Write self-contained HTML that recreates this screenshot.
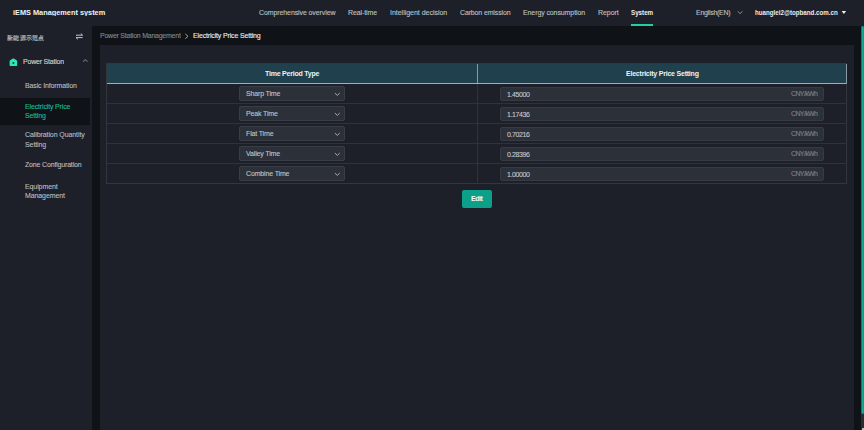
<!DOCTYPE html>
<html><head><meta charset="utf-8">
<style>
*{margin:0;padding:0;box-sizing:border-box}
html,body{width:864px;height:430px;overflow:hidden;background:#1d2029;font-family:"Liberation Sans",sans-serif}
.a{position:absolute}
.t{position:absolute;white-space:nowrap;transform-origin:0 0}
</style></head><body>

<div class="a" style="left:0px;top:0px;width:864px;height:26px;background:#1d2029;"></div>
<div class="t" style="left:13px;top:8.3px;font-size:16px;line-height:16px;color:#f2f3f4;font-weight:700;letter-spacing:0.000px;transform:scale(0.4590,0.5);">iEMS Management system</div>
<div class="t" style="left:259px;top:8.8px;font-size:14px;line-height:14px;color:#bfc2c6;font-weight:400;letter-spacing:-0.200px;-webkit-text-stroke:0.2px #bfc2c6;transform:scale(0.5000,0.5);">Comprehensive overview</div>
<div class="t" style="left:348px;top:8.8px;font-size:14px;line-height:14px;color:#bfc2c6;font-weight:400;letter-spacing:-0.200px;-webkit-text-stroke:0.2px #bfc2c6;transform:scale(0.5000,0.5);">Real-time</div>
<div class="t" style="left:390px;top:8.8px;font-size:14px;line-height:14px;color:#bfc2c6;font-weight:400;letter-spacing:-0.040px;-webkit-text-stroke:0.2px #bfc2c6;transform:scale(0.5000,0.5);">Intelligent decision</div>
<div class="t" style="left:460px;top:8.8px;font-size:14px;line-height:14px;color:#bfc2c6;font-weight:400;letter-spacing:-0.280px;-webkit-text-stroke:0.2px #bfc2c6;transform:scale(0.5000,0.5);">Carbon emission</div>
<div class="t" style="left:523px;top:8.8px;font-size:14px;line-height:14px;color:#bfc2c6;font-weight:400;letter-spacing:-0.200px;-webkit-text-stroke:0.2px #bfc2c6;transform:scale(0.5000,0.5);">Energy consumption</div>
<div class="t" style="left:598px;top:8.8px;font-size:14px;line-height:14px;color:#bfc2c6;font-weight:400;letter-spacing:-0.140px;-webkit-text-stroke:0.2px #bfc2c6;transform:scale(0.5000,0.5);">Report</div>
<div class="t" style="left:631px;top:8.8px;font-size:14px;line-height:14px;color:#f0f1f2;font-weight:700;letter-spacing:0.000px;transform:scale(0.4450,0.5);">System</div>
<div class="a" style="left:631px;top:24px;width:22px;height:2px;background:#25cf9d;"></div>
<div class="t" style="left:696px;top:8.8px;font-size:14px;line-height:14px;color:#bfc2c6;font-weight:400;letter-spacing:-0.560px;-webkit-text-stroke:0.2px #bfc2c6;transform:scale(0.5000,0.5);">English(EN)</div>
<svg class="a" style="left:737px;top:10px" width="7" height="5" viewBox="0 0 7 5"><path d="M0.7 1.3 L3.1 3.6 L5.5 1.3" fill="none" stroke="#8e9196" stroke-width="1"/></svg>
<div class="t" style="left:754.9px;top:8.8px;font-size:14px;line-height:14px;color:#eceded;font-weight:700;letter-spacing:0.000px;transform:scale(0.4425,0.5);">huanglei2@topband.com.cn</div>
<svg class="a" style="left:841px;top:10px" width="6" height="5" viewBox="0 0 6 5"><path d="M0.6 1.1 L5.1 1.1 L2.85 3.9 Z" fill="#eceeef"/></svg>
<div class="a" style="left:0px;top:26px;width:92px;height:404px;background:#1d2029;"></div>
<div class="t" style="left:6.8px;top:34.5px;font-size:12.2px;line-height:12.2px;color:#b3b6ba;font-weight:400;letter-spacing:0.600px;-webkit-text-stroke:0.4px #b3b6ba;transform:scale(0.5000,0.5);">新能源示范点</div>
<svg class="a" style="left:75px;top:33.2px" width="9" height="7" viewBox="0 0 9 7"><path d="M1 2.2 H7.6 M5.8 0.6 L7.6 2.2 M7.6 4.6 H1 M2.8 6.2 L1 4.6" fill="none" stroke="#d5d7d9" stroke-width="0.9"/></svg>
<svg class="a" style="left:9px;top:57.5px" width="9" height="9" viewBox="0 0 9 9"><path d="M0.6 3.3 Q0.6 2.9 0.9 2.6 L3.9 0.6 Q4.4 0.3 4.9 0.6 L7.9 2.6 Q8.2 2.9 8.2 3.3 V7.3 Q8.2 7.9 7.6 7.9 H1.2 Q0.6 7.9 0.6 7.3 Z" fill="#2de5b9"/><circle cx="4.4" cy="5.0" r="0.95" fill="#15332e"/></svg>
<div class="t" style="left:22.5px;top:58.2px;font-size:14px;line-height:14px;color:#d6d8da;font-weight:400;letter-spacing:-0.400px;-webkit-text-stroke:0.2px #d6d8da;transform:scale(0.5000,0.5);">Power Station</div>
<svg class="a" style="left:82px;top:58px" width="7" height="5" viewBox="0 0 7 5"><path d="M1.0 3.6 L3.3 1.6 L5.6 3.6" fill="none" stroke="#6c6f75" stroke-width="1.05"/></svg>
<div class="t" style="left:25px;top:81.9px;font-size:14px;line-height:14px;color:#babdc1;font-weight:400;letter-spacing:-0.280px;-webkit-text-stroke:0.2px #babdc1;transform:scale(0.5000,0.5);">Basic Information</div>
<div class="a" style="left:0px;top:98px;width:90px;height:27px;background:#0f1318;"></div>
<div class="t" style="left:25px;top:102.9px;font-size:14px;line-height:14px;color:#1abd98;font-weight:400;letter-spacing:-0.300px;-webkit-text-stroke:0.2px #1abd98;transform:scale(0.5000,0.5);">Electricity Price</div>
<div class="t" style="left:25px;top:112.2px;font-size:14px;line-height:14px;color:#1abd98;font-weight:400;letter-spacing:-0.300px;-webkit-text-stroke:0.2px #1abd98;transform:scale(0.5000,0.5);">Setting</div>
<div class="t" style="left:25px;top:131.2px;font-size:14px;line-height:14px;color:#babdc1;font-weight:400;letter-spacing:-0.180px;-webkit-text-stroke:0.2px #babdc1;transform:scale(0.5000,0.5);">Calibration Quantity</div>
<div class="t" style="left:25px;top:140.5px;font-size:14px;line-height:14px;color:#babdc1;font-weight:400;letter-spacing:-0.180px;-webkit-text-stroke:0.2px #babdc1;transform:scale(0.5000,0.5);">Setting</div>
<div class="t" style="left:25px;top:161.3px;font-size:14px;line-height:14px;color:#babdc1;font-weight:400;letter-spacing:-0.340px;-webkit-text-stroke:0.2px #babdc1;transform:scale(0.5000,0.5);">Zone Configuration</div>
<div class="t" style="left:25px;top:182.6px;font-size:14px;line-height:14px;color:#babdc1;font-weight:400;letter-spacing:-0.200px;-webkit-text-stroke:0.2px #babdc1;transform:scale(0.5000,0.5);">Equipment</div>
<div class="t" style="left:25px;top:191.9px;font-size:14px;line-height:14px;color:#babdc1;font-weight:400;letter-spacing:-0.200px;-webkit-text-stroke:0.2px #babdc1;transform:scale(0.5000,0.5);">Management</div>
<div class="a" style="left:92px;top:26px;width:8px;height:404px;background:#0f1318;"></div>
<div class="a" style="left:100px;top:26px;width:754px;height:19px;background:#0f1318;"></div>
<div class="t" style="left:99.7px;top:32.4px;font-size:14px;line-height:14px;color:#85888d;font-weight:400;letter-spacing:-0.480px;-webkit-text-stroke:0.2px #85888d;transform:scale(0.5000,0.5);">Power Station Management</div>
<svg class="a" style="left:184px;top:33px" width="6" height="7" viewBox="0 0 6 7"><path d="M1.3 0.9 L4.0 3.3 L1.3 5.7" fill="none" stroke="#a5a8ad" stroke-width="0.95"/></svg>
<div class="t" style="left:192.7px;top:32.4px;font-size:14px;line-height:14px;color:#eef0f1;font-weight:400;letter-spacing:-0.320px;-webkit-text-stroke:0.2px #eef0f1;transform:scale(0.5000,0.5);">Electricity Price Setting</div>
<div class="a" style="left:100px;top:45px;width:754px;height:385px;background:#1d2029;"></div>
<div class="a" style="left:854px;top:26px;width:7px;height:404px;background:#0f1318;"></div>
<div class="a" style="left:861px;top:26px;width:3px;height:388px;background:linear-gradient(to right,#0c7b6b 0,#0c7b6b 1px,#0bae95 1px,#0bae95 2px,#0a9f89 2px);border-radius:1.5px"></div>
<div class="a" style="left:861px;top:414px;width:3px;height:16px;background:#2a2b2f;"></div>
<div class="a" style="left:862px;top:428px;width:2px;height:2px;background:#c8c9cb;border-radius:1px 0 0 0"></div>
<div class="a" style="left:106px;top:63px;width:741px;height:121px;background:transparent;border:1px solid #33363c"></div>
<div class="a" style="left:107px;top:64px;width:740px;height:19px;background:#1f404c;"></div>
<div class="a" style="left:107px;top:83px;width:740px;height:1px;background:#a3aeb2;"></div>
<div class="a" style="left:477px;top:64px;width:1px;height:19px;background:#8a9ba0;"></div>
<div class="a" style="left:477px;top:84px;width:1px;height:100px;background:#2f3237;"></div>
<div class="a" style="left:846px;top:64px;width:1px;height:20px;background:#8a9ba0;"></div>
<div class="t" style="left:264.5px;top:70.2px;font-size:14px;line-height:14px;color:#eef2f3;font-weight:700;letter-spacing:-0.440px;transform:scale(0.5000,0.5);">Time Period Type</div>
<div class="t" style="left:625.5px;top:70.2px;font-size:14px;line-height:14px;color:#eef2f3;font-weight:700;letter-spacing:-0.440px;transform:scale(0.5000,0.5);">Electricity Price Setting</div>
<div class="a" style="left:107px;top:103px;width:740px;height:1px;background:#2f3237;"></div>
<div class="a" style="left:107px;top:123px;width:740px;height:1px;background:#2f3237;"></div>
<div class="a" style="left:107px;top:143px;width:740px;height:1px;background:#2f3237;"></div>
<div class="a" style="left:107px;top:163px;width:740px;height:1px;background:#2f3237;"></div>
<div class="a" style="left:239px;top:86px;width:106px;height:15px;background:#2c3039;border:1px solid #393d45;border-radius:2px"></div>
<div class="t" style="left:245.5px;top:90.2px;font-size:14px;line-height:14px;color:#c2c4c8;font-weight:400;letter-spacing:-0.300px;-webkit-text-stroke:0.2px #c2c4c8;transform:scale(0.5000,0.5);">Sharp Time</div>
<svg class="a" style="left:334px;top:92px" width="7" height="5" viewBox="0 0 7 5"><path d="M0.9 1.1 L3.3 3.4 L5.7 1.1" fill="none" stroke="#a9acb0" stroke-width="1.0"/></svg>
<div class="a" style="left:500px;top:87px;width:324px;height:14px;background:#2c3039;border:1px solid #363a42;border-radius:2px"></div>
<div class="t" style="left:507px;top:91px;font-size:14px;line-height:14px;color:#c8cacd;font-weight:400;letter-spacing:-0.800px;-webkit-text-stroke:0.2px #c8cacd;transform:scale(0.5000,0.5);">1.45000</div>
<div class="t" style="left:790.5px;top:90.3px;font-size:14px;line-height:14px;color:#808388;font-weight:400;letter-spacing:-1.240px;-webkit-text-stroke:0.2px #808388;transform:scale(0.5000,0.5);">CNY/kWh</div>
<div class="a" style="left:239px;top:106px;width:106px;height:15px;background:#2c3039;border:1px solid #393d45;border-radius:2px"></div>
<div class="t" style="left:245.5px;top:110.2px;font-size:14px;line-height:14px;color:#c2c4c8;font-weight:400;letter-spacing:-0.300px;-webkit-text-stroke:0.2px #c2c4c8;transform:scale(0.5000,0.5);">Peak Time</div>
<svg class="a" style="left:334px;top:112px" width="7" height="5" viewBox="0 0 7 5"><path d="M0.9 1.1 L3.3 3.4 L5.7 1.1" fill="none" stroke="#a9acb0" stroke-width="1.0"/></svg>
<div class="a" style="left:500px;top:107px;width:324px;height:14px;background:#2c3039;border:1px solid #363a42;border-radius:2px"></div>
<div class="t" style="left:507px;top:111px;font-size:14px;line-height:14px;color:#c8cacd;font-weight:400;letter-spacing:-0.800px;-webkit-text-stroke:0.2px #c8cacd;transform:scale(0.5000,0.5);">1.17436</div>
<div class="t" style="left:790.5px;top:110.3px;font-size:14px;line-height:14px;color:#808388;font-weight:400;letter-spacing:-1.240px;-webkit-text-stroke:0.2px #808388;transform:scale(0.5000,0.5);">CNY/kWh</div>
<div class="a" style="left:239px;top:126px;width:106px;height:15px;background:#2c3039;border:1px solid #393d45;border-radius:2px"></div>
<div class="t" style="left:245.5px;top:130.2px;font-size:14px;line-height:14px;color:#c2c4c8;font-weight:400;letter-spacing:-0.300px;-webkit-text-stroke:0.2px #c2c4c8;transform:scale(0.5000,0.5);">Flat Time</div>
<svg class="a" style="left:334px;top:132px" width="7" height="5" viewBox="0 0 7 5"><path d="M0.9 1.1 L3.3 3.4 L5.7 1.1" fill="none" stroke="#a9acb0" stroke-width="1.0"/></svg>
<div class="a" style="left:500px;top:127px;width:324px;height:14px;background:#2c3039;border:1px solid #363a42;border-radius:2px"></div>
<div class="t" style="left:507px;top:131px;font-size:14px;line-height:14px;color:#c8cacd;font-weight:400;letter-spacing:-0.800px;-webkit-text-stroke:0.2px #c8cacd;transform:scale(0.5000,0.5);">0.70216</div>
<div class="t" style="left:790.5px;top:130.3px;font-size:14px;line-height:14px;color:#808388;font-weight:400;letter-spacing:-1.240px;-webkit-text-stroke:0.2px #808388;transform:scale(0.5000,0.5);">CNY/kWh</div>
<div class="a" style="left:239px;top:146px;width:106px;height:15px;background:#2c3039;border:1px solid #393d45;border-radius:2px"></div>
<div class="t" style="left:245.5px;top:150.2px;font-size:14px;line-height:14px;color:#c2c4c8;font-weight:400;letter-spacing:-0.300px;-webkit-text-stroke:0.2px #c2c4c8;transform:scale(0.5000,0.5);">Valley Time</div>
<svg class="a" style="left:334px;top:152px" width="7" height="5" viewBox="0 0 7 5"><path d="M0.9 1.1 L3.3 3.4 L5.7 1.1" fill="none" stroke="#a9acb0" stroke-width="1.0"/></svg>
<div class="a" style="left:500px;top:147px;width:324px;height:14px;background:#2c3039;border:1px solid #363a42;border-radius:2px"></div>
<div class="t" style="left:507px;top:151px;font-size:14px;line-height:14px;color:#c8cacd;font-weight:400;letter-spacing:-0.800px;-webkit-text-stroke:0.2px #c8cacd;transform:scale(0.5000,0.5);">0.28396</div>
<div class="t" style="left:790.5px;top:150.3px;font-size:14px;line-height:14px;color:#808388;font-weight:400;letter-spacing:-1.240px;-webkit-text-stroke:0.2px #808388;transform:scale(0.5000,0.5);">CNY/kWh</div>
<div class="a" style="left:239px;top:166px;width:106px;height:15px;background:#2c3039;border:1px solid #393d45;border-radius:2px"></div>
<div class="t" style="left:245.5px;top:170.2px;font-size:14px;line-height:14px;color:#c2c4c8;font-weight:400;letter-spacing:-0.300px;-webkit-text-stroke:0.2px #c2c4c8;transform:scale(0.5000,0.5);">Combine Time</div>
<svg class="a" style="left:334px;top:172px" width="7" height="5" viewBox="0 0 7 5"><path d="M0.9 1.1 L3.3 3.4 L5.7 1.1" fill="none" stroke="#a9acb0" stroke-width="1.0"/></svg>
<div class="a" style="left:500px;top:167px;width:324px;height:14px;background:#2c3039;border:1px solid #363a42;border-radius:2px"></div>
<div class="t" style="left:507px;top:171px;font-size:14px;line-height:14px;color:#c8cacd;font-weight:400;letter-spacing:-0.800px;-webkit-text-stroke:0.2px #c8cacd;transform:scale(0.5000,0.5);">1.00000</div>
<div class="t" style="left:790.5px;top:170.3px;font-size:14px;line-height:14px;color:#808388;font-weight:400;letter-spacing:-1.240px;-webkit-text-stroke:0.2px #808388;transform:scale(0.5000,0.5);">CNY/kWh</div>
<div class="a" style="left:462px;top:190px;width:30px;height:18px;background:#0ca08b;border-radius:2px"></div>
<div class="t" style="left:471px;top:195.2px;font-size:14px;line-height:14px;color:#f4fbf9;font-weight:700;letter-spacing:-0.900px;transform:scale(0.5000,0.5);">Edit</div>
</body></html>
